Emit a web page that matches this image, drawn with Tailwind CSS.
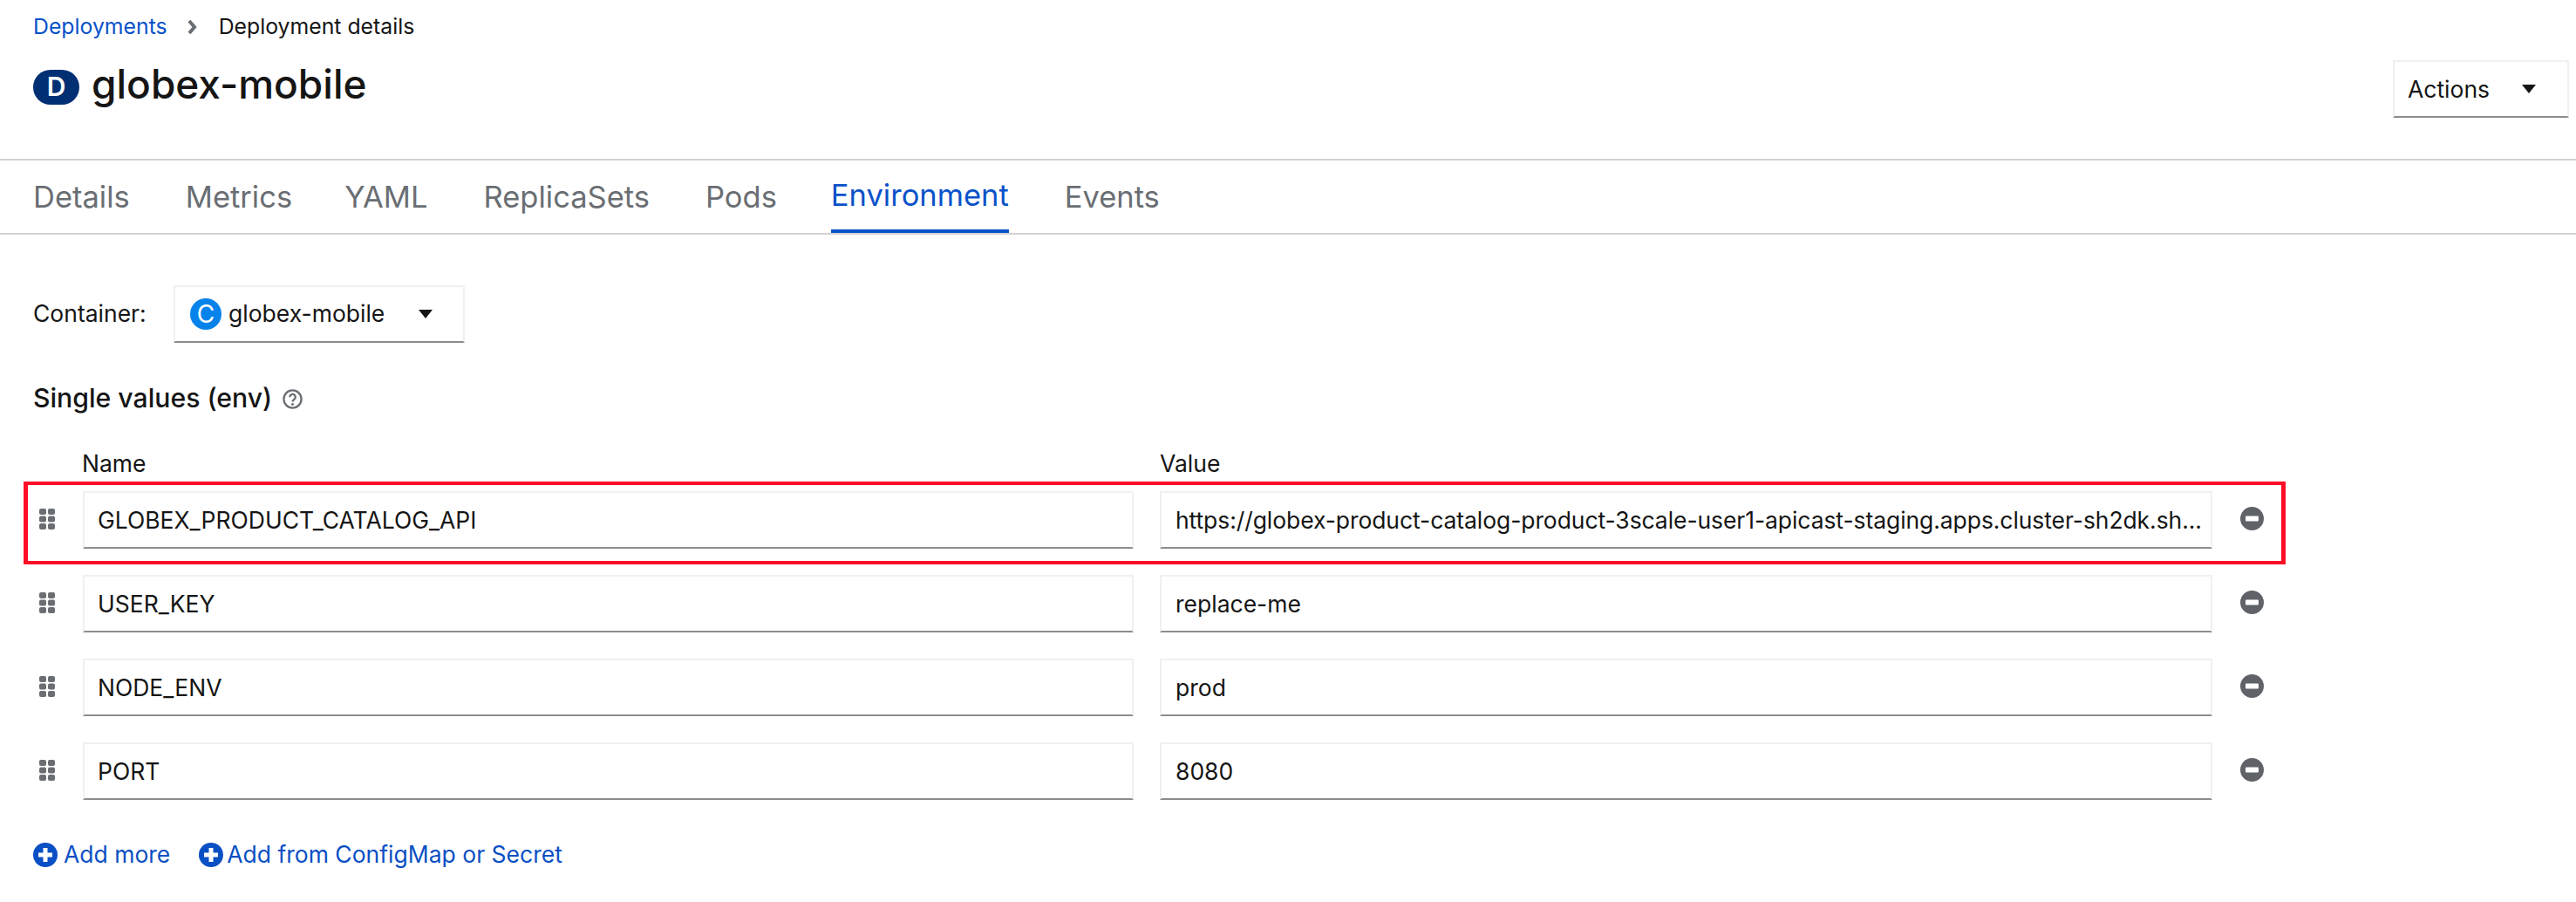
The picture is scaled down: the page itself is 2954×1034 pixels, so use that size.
<!DOCTYPE html>
<html lang="en">
<head>
    <meta charset="UTF-8">
    <title>globex-mobile</title>
    <script src="https://cdn.jsdelivr.net/npm/@tailwindcss/browser@4"></script>
</head>
<body class="bg-white w-[2954px] h-[1034px] overflow-hidden font-['Inter',sans-serif] text-[26.5px] text-[#151515]">
    <!-- breadcrumb + title -->
    <div class="h-[184px] border-b-2 border-[#d2d2d2] px-[38px] relative">
        <div class="flex items-center h-[61px] text-[24.8px]">
            <span class="text-[#0a52c9]">Deployments</span>
            <svg class="ml-[23px] mr-[25px] w-[11px] h-[18px]" viewBox="0 0 11 18"><path d="M2 2l6 7-6 7" fill="none" stroke="#6a6e73" stroke-width="4"/></svg>
            <span>Deployment details</span>
        </div>
        <div class="flex items-center mt-[18px] h-[41px]">
            <span class="w-[53px] h-[40px] rounded-full bg-[#012f74] text-white text-[30px] font-semibold flex items-center justify-center">D</span>
            <span class="ml-[14px] text-[46px] font-medium -translate-y-[3px]">globex-mobile</span>
        </div>
        <div class="absolute right-[8px] top-[69px] w-[202px] h-[66px] border-2 border-[#f0f0f0] border-b-[#8a8d90] flex items-center justify-between pl-[15px] pr-[36px]">
            <span class="pt-[2px]">Actions</span>
            <svg class="w-[16px] h-[10px]" viewBox="0 0 16 10"><path d="M0 0h16l-8 10z" fill="#151515"/></svg>
        </div>
    </div>
    <!-- tabs -->
    <div class="h-[85px] border-b-2 border-[#d2d2d2] flex pl-[38px] gap-[64px] text-[34.5px] text-[#6a6e73]">
        <span class="h-[83px] flex items-center">Details</span>
        <span class="h-[83px] flex items-center">Metrics</span>
        <span class="h-[83px] flex items-center -ml-[4px]">YAML</span>
        <span class="h-[83px] flex items-center">ReplicaSets</span>
        <span class="h-[83px] flex items-center">Pods</span>
        <span class="h-[83px] flex items-center -ml-[2px] text-[#0a52c9] border-b-4 border-[#0a52c9]">Environment</span>
        <span class="h-[83px] flex items-center">Events</span>
    </div>
    <!-- container select -->
    <div class="flex items-center px-[38px] mt-[58px]">
        <span class="w-[161px]">Container:</span>
        <div class="w-[334px] h-[66px] border-2 border-[#f0f0f0] border-b-[#8a8d90] flex items-center pl-[17px]">
            <span class="w-[36px] h-[36px] rounded-full bg-[#0683ea] text-white text-[28px] flex items-center justify-center">C</span>
            <span class="ml-[8px] w-[218px]">globex-mobile</span>
            <svg class="w-[16px] h-[10px]" viewBox="0 0 16 10"><path d="M0 0h16l-8 10z" fill="#151515"/></svg>
        </div>
    </div>
    <div class="flex items-center px-[38px] mt-[47px] h-[34px]">
        <span class="text-[30.2px] font-medium">Single values (env)</span>
        <svg class="ml-[12px] w-[23px] h-[23px]" viewBox="0 0 24 24"><circle cx="12" cy="12" r="10.5" fill="none" stroke="#6a6e73" stroke-width="2.4"/><path d="M8.6 9.6a3.4 3.4 0 1 1 5.2 2.9c-1.2.8-1.8 1.4-1.8 2.7" fill="none" stroke="#6a6e73" stroke-width="2.4"/><circle cx="12" cy="18.2" r="1.5" fill="#6a6e73"/></svg>
    </div>
    <!-- env rows -->
    <div class="flex mt-[41px] h-[34px] items-center pl-[94px]">
        <span class="w-[1236px]">Name</span>
        <span>Value</span>
    </div>
    <div class="flex flex-col gap-[30px] mt-[14px] relative">
        <div class="absolute left-[27px] top-[-11px] w-[2594px] h-[95px] border-x-[5px] border-y-4 border-[#ff0d26]"></div>

        <div class="flex items-center h-[66px]">
            <svg class="ml-[45px] mr-[32px] mb-[2px] w-[18px] h-[24px]" viewBox="0 0 18 24" fill="#6a6e73"><rect width="8" height="7" rx="2"/><rect x="10" width="8" height="7" rx="2"/><rect y="8.5" width="8" height="7" rx="2"/><rect x="10" y="8.5" width="8" height="7" rx="2"/><rect y="17" width="8" height="7" rx="2"/><rect x="10" y="17" width="8" height="7" rx="2"/></svg>
            <div class="w-[1205px] h-[66px] border-2 border-[#f0f0f0] border-b-[#8a8d90] flex items-center pl-[15px] pt-[2px]">GLOBEX_PRODUCT_CATALOG_API</div>
            <div class="ml-[30px] w-[1207px] h-[66px] border-2 border-[#f0f0f0] border-b-[#8a8d90] flex items-center pl-[16px] pt-[2px] tracking-[-0.08px] whitespace-nowrap overflow-hidden">https://globex-product-catalog-product-3scale-user1-apicast-staging.apps.cluster-sh2dk.sh...</div>
            <svg class="ml-[32px] mb-[3px] w-[27px] h-[27px]" viewBox="0 0 27 27"><circle cx="13.5" cy="13.5" r="13.5" fill="#5f6368"/><rect x="6" y="10.5" width="15" height="6" rx="1" fill="#fff"/></svg>
        </div>

        <div class="flex items-center h-[66px]">
            <svg class="ml-[45px] mr-[32px] mb-[2px] w-[18px] h-[24px]" viewBox="0 0 18 24" fill="#6a6e73"><rect width="8" height="7" rx="2"/><rect x="10" width="8" height="7" rx="2"/><rect y="8.5" width="8" height="7" rx="2"/><rect x="10" y="8.5" width="8" height="7" rx="2"/><rect y="17" width="8" height="7" rx="2"/><rect x="10" y="17" width="8" height="7" rx="2"/></svg>
            <div class="w-[1205px] h-[66px] border-2 border-[#f0f0f0] border-b-[#8a8d90] flex items-center pl-[15px] pt-[2px]">USER_KEY</div>
            <div class="ml-[30px] w-[1207px] h-[66px] border-2 border-[#f0f0f0] border-b-[#8a8d90] flex items-center pl-[16px] pt-[2px]">replace-me</div>
            <svg class="ml-[32px] mb-[3px] w-[27px] h-[27px]" viewBox="0 0 27 27"><circle cx="13.5" cy="13.5" r="13.5" fill="#5f6368"/><rect x="6" y="10.5" width="15" height="6" rx="1" fill="#fff"/></svg>
        </div>

        <div class="flex items-center h-[66px]">
            <svg class="ml-[45px] mr-[32px] mb-[2px] w-[18px] h-[24px]" viewBox="0 0 18 24" fill="#6a6e73"><rect width="8" height="7" rx="2"/><rect x="10" width="8" height="7" rx="2"/><rect y="8.5" width="8" height="7" rx="2"/><rect x="10" y="8.5" width="8" height="7" rx="2"/><rect y="17" width="8" height="7" rx="2"/><rect x="10" y="17" width="8" height="7" rx="2"/></svg>
            <div class="w-[1205px] h-[66px] border-2 border-[#f0f0f0] border-b-[#8a8d90] flex items-center pl-[15px] pt-[2px]">NODE_ENV</div>
            <div class="ml-[30px] w-[1207px] h-[66px] border-2 border-[#f0f0f0] border-b-[#8a8d90] flex items-center pl-[16px] pt-[2px]">prod</div>
            <svg class="ml-[32px] mb-[3px] w-[27px] h-[27px]" viewBox="0 0 27 27"><circle cx="13.5" cy="13.5" r="13.5" fill="#5f6368"/><rect x="6" y="10.5" width="15" height="6" rx="1" fill="#fff"/></svg>
        </div>

        <div class="flex items-center h-[66px]">
            <svg class="ml-[45px] mr-[32px] mb-[2px] w-[18px] h-[24px]" viewBox="0 0 18 24" fill="#6a6e73"><rect width="8" height="7" rx="2"/><rect x="10" width="8" height="7" rx="2"/><rect y="8.5" width="8" height="7" rx="2"/><rect x="10" y="8.5" width="8" height="7" rx="2"/><rect y="17" width="8" height="7" rx="2"/><rect x="10" y="17" width="8" height="7" rx="2"/></svg>
            <div class="w-[1205px] h-[66px] border-2 border-[#f0f0f0] border-b-[#8a8d90] flex items-center pl-[15px] pt-[2px]">PORT</div>
            <div class="ml-[30px] w-[1207px] h-[66px] border-2 border-[#f0f0f0] border-b-[#8a8d90] flex items-center pl-[16px] pt-[2px]">8080</div>
            <svg class="ml-[32px] mb-[3px] w-[27px] h-[27px]" viewBox="0 0 27 27"><circle cx="13.5" cy="13.5" r="13.5" fill="#5f6368"/><rect x="6" y="10.5" width="15" height="6" rx="1" fill="#fff"/></svg>
        </div>
    </div>
    <!-- add links -->
    <div class="flex items-center pl-[38px] mt-[46px] h-[34px] text-[#0a4fc4]">
        <svg class="w-[28px] h-[28px]" viewBox="0 0 28 28"><circle cx="14" cy="14" r="14" fill="#0a4fc4"/><path d="M14 6v16M6 14h16" stroke="#fff" stroke-width="5"/></svg>
        <span class="ml-[7px]">Add more</span>
        <svg class="ml-[33px] w-[28px] h-[28px]" viewBox="0 0 28 28"><circle cx="14" cy="14" r="14" fill="#0a4fc4"/><path d="M14 6v16M6 14h16" stroke="#fff" stroke-width="5"/></svg>
        <span class="ml-[4px]">Add from ConfigMap or Secret</span>
    </div>
</body>
</html>
